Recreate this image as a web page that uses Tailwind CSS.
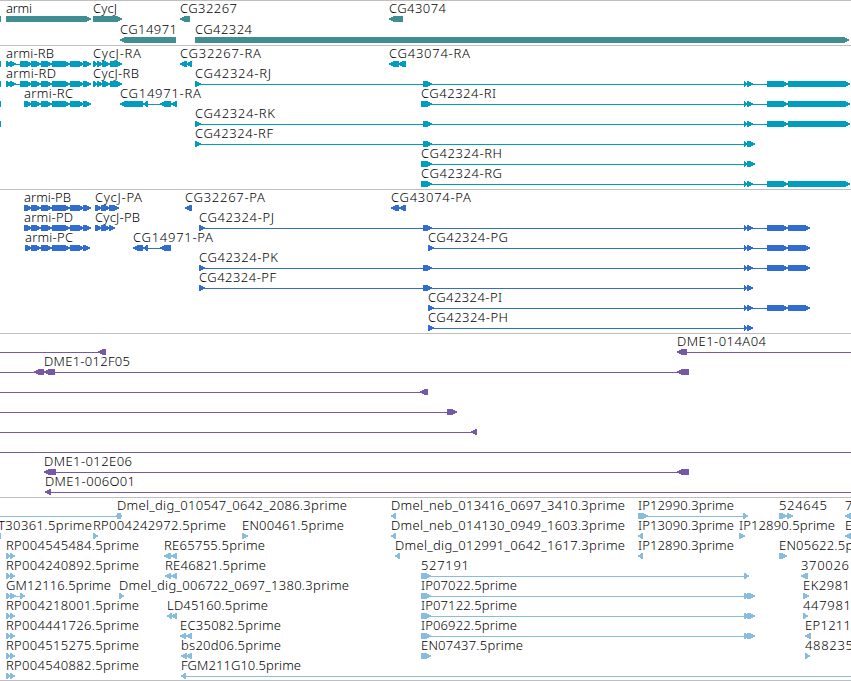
<!DOCTYPE html>
<html>
<head>
  <meta charset="utf-8">
  <title>Genome Browser</title>
  <script src="https://cdn.jsdelivr.net/npm/@tailwindcss/browser@4"></script>
</head>
<body class="bg-white overflow-hidden">
  <main class="w-[851px] flex flex-col font-['Noto_Sans',sans-serif] font-light text-[13px] border-b border-[#bebebe]">
    <section class="h-[45px] border-t border-[#bebebe] text-[#408e94]"><svg id="genes" class="block w-full h-full overflow-visible"></svg></section>
    <section class="h-36 border-t border-[#bebebe] text-[#009dc0]"><svg id="transcripts" class="block w-full h-full overflow-visible"></svg></section>
    <section class="h-36 border-t border-[#bebebe] text-[#316dce]"><svg id="proteins" class="block w-full h-full overflow-visible"></svg></section>
    <section class="h-41 border-t border-[#bebebe] text-[#7658a8]"><svg id="clones" class="block w-full h-full overflow-visible"></svg></section>
    <section class="h-[183px] border-t border-[#bebebe] text-[#88bde0]"><svg id="ests" class="block w-full h-full overflow-visible"></svg></section>
  </main>

  <script>
    // feature: [row, strand, blocks, label, label x, label width, line]
    const armi = [[41, 52], [52, 70], [70, 84], [83, 91]];
    const armiR = [[6, 12], [10, 16], [20, 32], [31, 41], ...armi];
    const armiP = [[24, 32], [31, 41], ...armi];
    const mid = [[744, 748], [747, 753]];
    const tailR = [...mid, [767, 788], [788, 850]];
    const tailP = [...mid, [767, 788], [788, 810]];
    const shortR = [[744, 748], [747, 755]];

    const tracks = {
      genes: { step: 21, items: [
        [0, '', [[0, 1]]],
        [0, '>', [[6, 91]], 'armi', 6, 26],
        [0, '>', [[93, 122]], 'CycJ', 93, 24],
        [0, '<', [[180, 190]], 'CG32267', 180, 57],
        [0, '<', [[389, 403]], 'CG43074', 389, 57],
        [1, '<', [[120, 176]], 'CG14971', 120, 57],
        [1, '>', [[195, 849]], 'CG42324', 195, 57],
      ]},
      transcripts: { step: 20, items: [
        [0, '', [[0, 1]]],
        [1, '', [[0, 1]]],
        [2, '', [[0, 1]]],
        [3, '', [[0, 1]]],
        [0, '>', armiR, 'armi-RB', 6, 48],
        [0, '>', [[93, 98], [97, 103], [102, 110], [110, 122]], 'CycJ-RA', 93, 48],
        [0, '<', [[180, 187], [186, 192]], 'CG32267-RA', 180, 81],
        [0, '<', [[389, 399], [398, 406]], 'CG43074-RA', 389, 81],
        [1, '>', armiR, 'armi-RD', 6, 50],
        [1, '>', [[93, 98], [97, 103], [102, 110], [110, 122]], 'CycJ-RB', 93, 46],
        [1, '>', [[195, 201], [423, 432], ...tailR], 'CG42324-RJ', 195, 76],
        [2, '>', [[24, 32], [31, 41], ...armi], 'armi-RC', 24, 49],
        [2, '<', [[120, 143], [143, 148], [160, 171], [171, 177]], 'CG14971-RA', 120, 81],
        [2, '>', [[421, 432], ...tailR], 'CG42324-RI', 421, 75],
        [3, '>', [[195, 201], [423, 432], ...tailR], 'CG42324-RK', 195, 80],
        [4, '>', [[195, 201], [423, 432], ...shortR], 'CG42324-RF', 195, 78],
        [5, '>', [[421, 432], ...shortR], 'CG42324-RH', 421, 81],
        [6, '>', [[421, 432], ...tailR], 'CG42324-RG', 421, 81],
      ]},
      proteins: { step: 20, items: [
        [0, '>', armiP, 'armi-PB', 24, 47],
        [0, '>', [[95, 102], [101, 110], [109, 119]], 'CycJ-PA', 95, 47],
        [0, '<', [[185, 192]], 'CG32267-PA', 185, 80],
        [0, '<', [[391, 399], [399, 406]], 'CG43074-PA', 391, 80],
        [1, '>', armiP, 'armi-PD', 24, 49],
        [1, '>', [[95, 102], [101, 110], [109, 115]], 'CycJ-PB', 95, 45],
        [1, '>', [[199, 205], [423, 432], ...tailP], 'CG42324-PJ', 199, 75],
        [2, '>', [[25, 32], ...armiP.slice(1, -1), [83, 90]], 'armi-PC', 25, 48],
        [2, '<', [[133, 143], [143, 148], [160, 171]], 'CG14971-PA', 133, 80],
        [2, '>', [[428, 434], ...tailP], 'CG42324-PG', 428, 80],
        [3, '>', [[199, 205], [423, 432], ...tailP], 'CG42324-PK', 199, 79],
        [4, '>', [[199, 205], [423, 432], ...mid], 'CG42324-PF', 199, 77],
        [5, '>', [[428, 434], ...tailP], 'CG42324-PI', 428, 74],
        [6, '>', [[428, 434], ...mid], 'CG42324-PH', 428, 80],
      ]},
      clones: { step: 20, items: [
        [0, '<', [[98, 106]], '', 0, 0, [0, 106]],
        [0, '<', [[677, 687]], 'DME1-014A04', 677, 89, [677, 851]],
        [1, '<', [[34, 44], [44, 55], [677, 689]], 'DME1-012F05', 44, 86, [0, 689]],
        [2, '<', [[420, 428]], '', 0, 0, [0, 428]],
        [3, '>', [[447, 457]], '', 0, 0, [0, 457]],
        [4, '<', [[471, 477]], '', 0, 0, [0, 477]],
        [5, '', [], '', 0, 0, [0, 851]],
        [6, '<', [[44, 56], [677, 689]], 'DME1-012E06', 44, 88],
        [7, '<', [[45, 51]], 'DME1-006O01', 45, 90, [45, 851]],
      ]},
      ests: { step: 20, items: [
        [0, '>', [[117, 122]], 'Dmel_dig_010547_0642_2086.3prime', 117, 230, [0, 120]],
        [0, '<', [[116, 121]]],
        [0, '<', [[391, 396]], 'Dmel_neb_013416_0697_3410.3prime', 391, 234],
        [0, '>', [[638, 648], [743, 748]], 'IP12990.3prime', 638, 96],
        [0, '>', [[779, 787], [787, 793]], '524645', 779, 48],
        [0, '<', [[845, 855]], '7', 845, 8],
        [1, '', [[0, 1]], 'T30361.5prime', -2, 94],
        [1, '>', [[93, 98]], 'RP004242972.5prime', 93, 133],
        [1, '>', [[242, 248]], 'EN00461.5prime', 242, 102],
        [1, '<', [[391, 396]], 'Dmel_neb_014130_0949_1603.3prime', 391, 234],
        [1, '<', [[638, 643]], 'IP13090.3prime', 638, 96],
        [1, '>', [[739, 745]], 'IP12890.5prime', 739, 96],
        [1, '<', [[845, 855]], 'E', 845, 7],
        [2, '>', [[6, 11], [10, 15]], 'RP004545484.5prime', 6, 133],
        [2, '<', [[164, 171], [171, 177]], 'RE65755.5prime', 164, 101],
        [2, '<', [[395, 400]], 'Dmel_dig_012991_0642_1617.3prime', 395, 230],
        [2, '<', [[638, 643]], 'IP12890.3prime', 638, 96],
        [2, '>', [[779, 787]], 'EN05622.5prime', 779, 102],
        [3, '>', [[6, 11], [10, 15]], 'RP004240892.5prime', 6, 133],
        [3, '<', [[165, 171], [171, 177]], 'RE46821.5prime', 165, 101],
        [3, '>', [[421, 431], [744, 749]], '527191', 421, 48],
        [3, '<', [[801, 808]], '370026', 801, 48],
        [4, '>', [[6, 11], [10, 16], [20, 25]], 'GM12116.5prime', 6, 105],
        [4, '>', [[119, 124]], 'Dmel_dig_006722_0697_1380.3prime', 119, 230],
        [4, '>', [[421, 431], [744, 749], [747, 755]], 'IP07022.5prime', 421, 96],
        [4, '>', [[803, 809]], 'EK2981', 803, 47],
        [5, '>', [[6, 11], [10, 15]], 'RP004218001.5prime', 6, 133],
        [5, '<', [[167, 172], [171, 177]], 'LD45160.5prime', 167, 101],
        [5, '>', [[421, 431], [744, 749], [747, 755]], 'IP07122.5prime', 421, 96],
        [5, '>', [[803, 808]], '447981', 803, 48],
        [6, '>', [[6, 11], [10, 15]], 'RP004441726.5prime', 6, 133],
        [6, '<', [[180, 186], [186, 192]], 'EC35082.5prime', 180, 101],
        [6, '>', [[421, 431], [744, 749], [747, 755]], 'IP06922.5prime', 421, 96],
        [6, '<', [[805, 811]], 'EP1211', 805, 46],
        [7, '>', [[6, 11], [10, 15]], 'RP004515275.5prime', 6, 133],
        [7, '<', [[181, 187], [186, 192]], 'bs20d06.5prime', 181, 100],
        [7, '>', [[421, 431]], 'EN07437.5prime', 421, 102],
        [7, '>', [[805, 810]], '488235', 805, 48],
        [8, '>', [[6, 11], [10, 15]], 'RP004540882.5prime', 6, 133],
        [8, '<', [[181, 186]], 'FGM211G10.5prime', 181, 120, [181, 851]],
      ]},
    };

    function block(strand, x1, x2, y) {
      if (!strand) return `M${x1} ${y}H${x2}V${y + 6}H${x1}Z`;
      const from = strand === '>' ? x1 : x2;
      const tip = strand === '>' ? x2 : x1;
      const dir = strand === '>' ? -1 : 1;
      const head = tip + dir * Math.min(5, x2 - x1 - 1);
      const neck = tip + dir * 2;
      return `M${from} ${y}H${head}L${neck} ${y + 1.4}L${tip} ${y + 2}V${y + 3.6}L${neck} ${y + 4.6}L${head} ${y + 6}H${from}Z`;
    }

    // y values sit one pixel below the section's top border
    for (const [id, track] of Object.entries(tracks)) {
      document.getElementById(id).innerHTML = track.items.map(([row, strand, blocks, label, x, width, line]) => {
        const y = row * track.step;
        const span = line || [blocks[0][0], blocks[blocks.length - 1][1] - 2];
        const hasLine = line || blocks.length > 1;
        return `
          ${hasLine ? `<rect x="${span[0]}" y="${y + 18}" width="${span[1] - span[0]}" height="1" fill="currentColor"/>` : ''}
          <path d="${blocks.map(b => block(strand, b[0], b[1], y + 15)).join('')}" fill="currentColor" shape-rendering="crispEdges"/>
          ${label ? `<text x="${x}" y="${y + 12}" textLength="${width}" fill="black">${label}</text>` : ''}`;
      }).join('');
    }
  </script>
</body>
</html>
